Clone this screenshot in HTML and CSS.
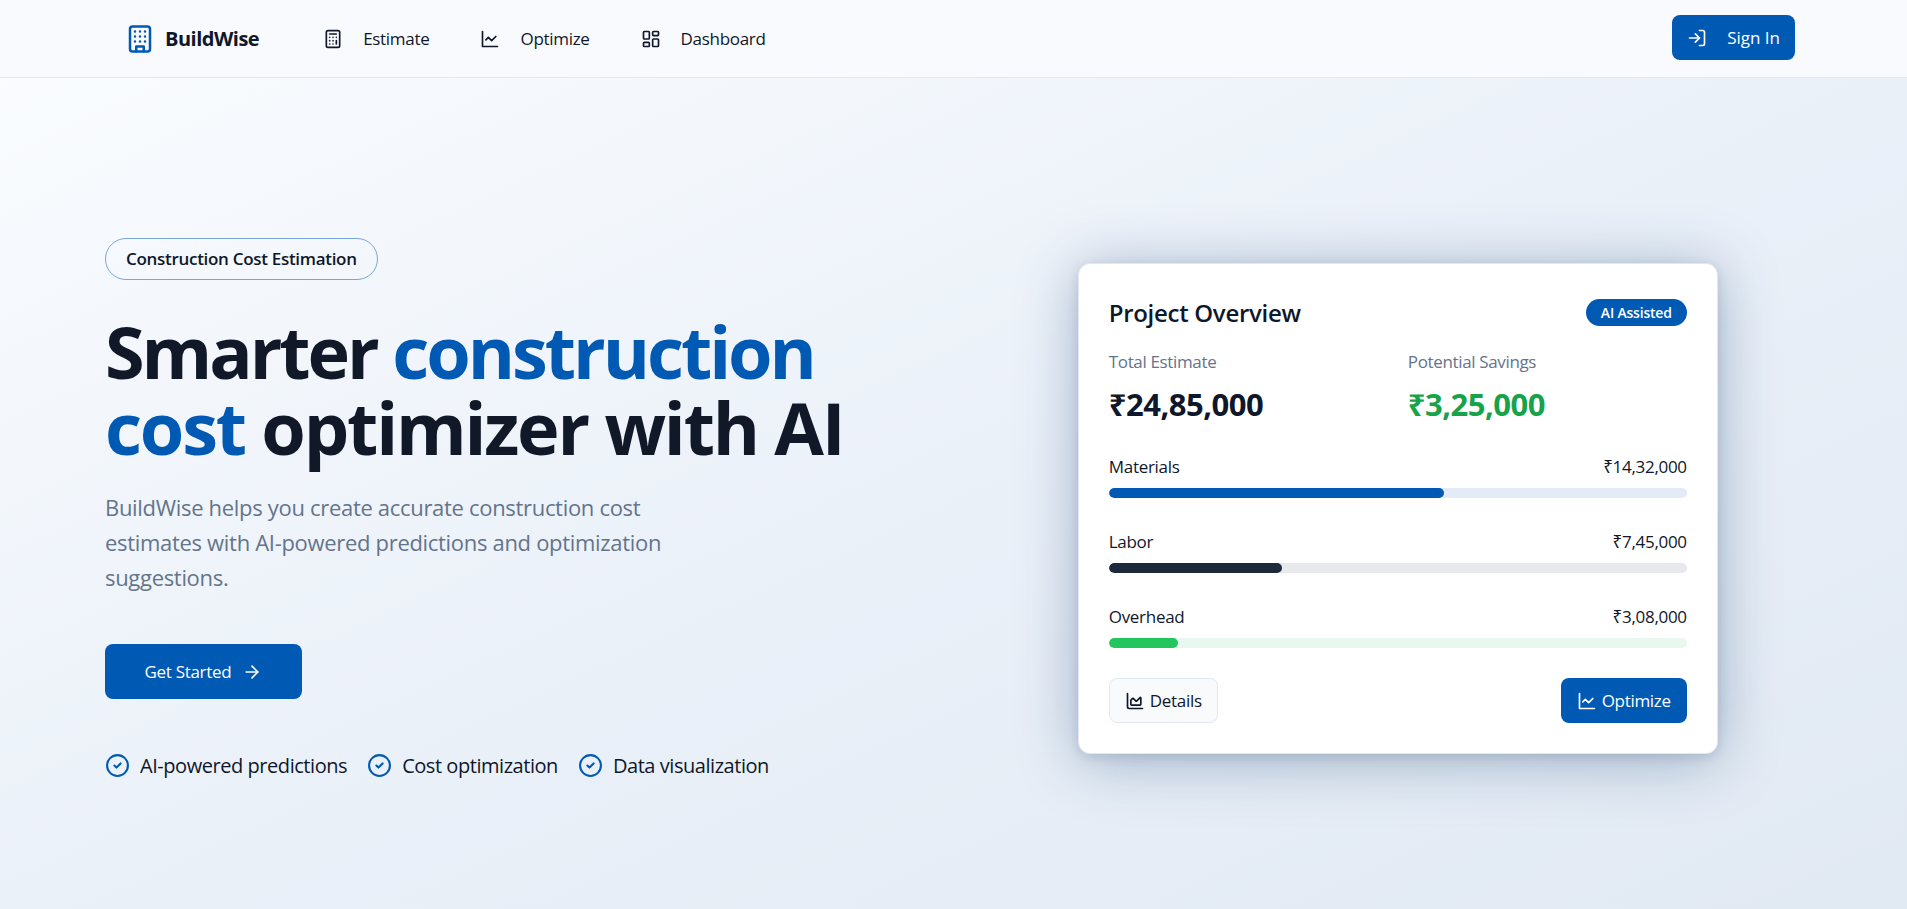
FILE: index.html
```html
<!DOCTYPE html>
<html lang="en">
<head>
  <meta charset="UTF-8" />
  <meta name="viewport" content="width=device-width, initial-scale=1.0"/>
  <title>BuildWise</title>
  <link rel="stylesheet" href="styles.css">
</head>
<body>

  <header class="topbar">
    <div class="topbar-left">
      <a class="brand" href="#">
        <svg class="icon brand-icon" viewBox="0 0 24 24"><rect x="4" y="2" width="16" height="20" rx="2"/><path d="M9 22v-4h6v4"/><path d="M8 6h.01M12 6h.01M16 6h.01M8 10h.01M12 10h.01M16 10h.01M8 14h.01M12 14h.01M16 14h.01"/></svg>
        <span>BuildWise</span>
      </a>
      <nav class="nav">
        <a href="#">
          <svg class="icon nav-icon" viewBox="0 0 24 24"><rect x="4" y="2" width="16" height="20" rx="2"/><path d="M8 6h8M16 14v4M16 10h.01M12 10h.01M8 10h.01M12 14h.01M8 14h.01M12 18h.01M8 18h.01"/></svg>
          Estimate
        </a>
        <a href="#">
          <svg class="icon nav-icon" viewBox="0 0 24 24"><path d="M3 3v18h18"/><path d="m19 9-5 5-4-4-3 3"/></svg>
          Optimize
        </a>
        <a href="#">
          <svg class="icon nav-icon" viewBox="0 0 24 24"><rect x="3" y="3" width="7" height="9" rx="1"/><rect x="14" y="3" width="7" height="5" rx="1"/><rect x="14" y="12" width="7" height="9" rx="1"/><rect x="3" y="16" width="7" height="5" rx="1"/></svg>
          Dashboard
        </a>
      </nav>
    </div>
    <a class="signin" href="#">
      <svg class="icon nav-icon" viewBox="0 0 24 24"><path d="M15 3h4a2 2 0 0 1 2 2v14a2 2 0 0 1-2 2h-4"/><path d="m10 17 5-5-5-5"/><path d="M15 12H3"/></svg>
      Sign In
    </a>
  </header>

  <main class="hero">
    <section class="hero-copy">
      <span class="pill">Construction Cost Estimation</span>
      <h1><span class="first-line">Smarter <em>construction</em></span> <em>cost</em> optimizer with AI</h1>
      <p class="lead">BuildWise helps you create accurate construction cost estimates with AI-powered predictions and optimization suggestions.</p>
      <a class="cta" href="#">
        Get Started
        <svg class="icon cta-icon" viewBox="0 0 24 24"><path d="M5 12h14"/><path d="m12 5 7 7-7 7"/></svg>
      </a>
      <ul class="perks">
        <li><svg class="icon perk-icon" viewBox="0 0 24 24"><circle cx="12" cy="12" r="10"/><path d="m9 12 2 2 4-4"/></svg>AI-powered predictions</li>
        <li><svg class="icon perk-icon" viewBox="0 0 24 24"><circle cx="12" cy="12" r="10"/><path d="m9 12 2 2 4-4"/></svg>Cost optimization</li>
        <li><svg class="icon perk-icon" viewBox="0 0 24 24"><circle cx="12" cy="12" r="10"/><path d="m9 12 2 2 4-4"/></svg>Data visualization</li>
      </ul>
    </section>

    <section class="hero-side">
      <div class="card">
        <div class="card-head">
          <h2>Project Overview</h2>
          <span class="tag">AI Assisted</span>
        </div>
        <div class="totals">
          <div>
            <div class="total-label">Total Estimate</div>
            <div class="total-value">₹24,85,000</div>
          </div>
          <div>
            <div class="total-label">Potential Savings</div>
            <div class="total-value green">₹3,25,000</div>
          </div>
        </div>
        <div class="costs">
          <div class="cost">
            <div class="cost-row"><span>Materials</span><span>₹14,32,000</span></div>
            <div class="track track-blue"><div class="fill fill-blue" style="width:58%"></div></div>
          </div>
          <div class="cost">
            <div class="cost-row"><span>Labor</span><span>₹7,45,000</span></div>
            <div class="track track-grey"><div class="fill fill-dark" style="width:30%"></div></div>
          </div>
          <div class="cost">
            <div class="cost-row"><span>Overhead</span><span>₹3,08,000</span></div>
            <div class="track track-green"><div class="fill fill-green" style="width:12%"></div></div>
          </div>
        </div>
        <div class="card-actions">
          <a class="btn btn-light" href="#">
            <svg class="icon btn-icon" viewBox="0 0 24 24"><path d="M3 3v16a2 2 0 0 0 2 2h16"/><path d="M7 11.207a.5.5 0 0 1 .146-.353l2-2a.5.5 0 0 1 .708 0l3.292 3.292a.5.5 0 0 0 .708 0l4.292-4.292a.5.5 0 0 1 .854.353V16a1 1 0 0 1-1 1H8a1 1 0 0 1-1-1z"/></svg>
            Details
          </a>
          <a class="btn btn-blue" href="#">
            <svg class="icon btn-icon" viewBox="0 0 24 24"><path d="M3 3v18h18"/><path d="m19 9-5 5-4-4-3 3"/></svg>
            Optimize
          </a>
        </div>
      </div>
    </section>
  </main>

</body>
</html>
```

FILE: styles.css
```css
:root {
  --azul: #005ab4;
  --oscuro: #0f172a;
  --gris: #64748b;
  --borde: #e2e8f0;
  --fuente: "Open Sans", "Noto Sans", Arial, sans-serif;
}
* { box-sizing: border-box; margin: 0; padding: 0; }
html, body { height: 100%; }
body {
  font-family: var(--fuente);
  color: var(--oscuro);
  background: linear-gradient(155deg, #fbfdff 0%, #ebf1f9 50%, #e1e9f3 100%);
  overflow: hidden;
}
a { color: inherit; text-decoration: none; }

.icon {
  fill: none;
  stroke: currentColor;
  stroke-width: 2;
  stroke-linecap: round;
  stroke-linejoin: round;
  flex: none;
}

/* Header */
.topbar {
  height: 78px;
  display: flex;
  align-items: center;
  justify-content: space-between;
  padding: 0 112px 0 125px;
  background: #f9fafd;
  border-bottom: 1px solid var(--borde);
}
.topbar-left { display: flex; align-items: center; }
.brand {
  display: flex;
  align-items: center;
  gap: 10px;
  font-size: 20px;
  font-weight: 700;
  letter-spacing: -0.5px;
}
.brand-icon { width: 30px; height: 30px; color: var(--azul); }
.nav { display: flex; gap: 51px; margin-left: 64px; }
.nav a {
  display: flex;
  align-items: center;
  gap: 20px;
  font-size: 17px;
  letter-spacing: -0.3px;
}
.nav-icon { width: 20px; height: 20px; }
.signin {
  display: flex;
  align-items: center;
  gap: 20px;
  height: 45px;
  margin-bottom: 2px;
  padding: 0 15px;
  border-radius: 8px;
  background: var(--azul);
  color: #fff;
  font-size: 17px;
}

/* Hero */
.hero {
  display: grid;
  grid-template-columns: 1fr 1fr;
  gap: 80px;
  align-items: center;
  height: 861px;
  padding: 0 105px;
}
.pill {
  display: inline-block;
  padding: 9px 20px;
  border: 1px solid #7aa5d8;
  border-radius: 999px;
  font-size: 17px;
  font-weight: 600;
  letter-spacing: -0.3px;
  line-height: 22px;
}
h1 {
  margin-top: 33px;
  font-size: 72px;
  line-height: 76px;
  font-weight: 700;
  letter-spacing: -2.2px;
  color: #111827;
  max-width: 760px;
}
h1 em { font-style: normal; color: var(--azul); }
.first-line { letter-spacing: -3.05px; }
.lead {
  margin-top: 25px;
  max-width: 580px;
  font-size: 22px;
  line-height: 35.2px;
  color: var(--gris);
  letter-spacing: -0.31px;
}
.cta {
  display: inline-flex;
  align-items: center;
  gap: 11px;
  height: 55px;
  margin-top: 49px;
  padding: 0 39.5px;
  border-radius: 8px;
  background: var(--azul);
  color: #fff;
  font-size: 17px;
  letter-spacing: -0.3px;
}
.cta-icon { width: 20px; height: 20px; }
.perks {
  display: flex;
  gap: 20px;
  margin-top: 53px;
  list-style: none;
  font-size: 20px;
  letter-spacing: -0.45px;
}
.perks li { display: flex; align-items: center; gap: 10px; }
.perk-icon { width: 25px; height: 25px; color: var(--azul); }

/* Tarjeta */
.hero-side { display: flex; justify-content: center; }
.card {
  width: 640px;
  padding: 32px 30px 30px;
  background: #fff;
  border: 1px solid #e2e8f0;
  border-radius: 12px;
  box-shadow: 0 6px 60px rgba(20, 60, 110, 0.35), 0 3px 12px rgba(15, 40, 80, 0.12);
}
.card-head {
  display: flex;
  align-items: center;
  justify-content: space-between;
}
.card-head h2 { font-size: 24px; font-weight: 600; letter-spacing: -0.3px; }
.tag {
  padding: 4px 15px;
  border-radius: 999px;
  background: var(--azul);
  color: #fff;
  font-size: 14px;
  font-weight: 600;
  letter-spacing: -0.2px;
}
.totals {
  display: grid;
  grid-template-columns: 1fr 1fr;
  gap: 0 20px;
  margin-top: 21px;
}
.total-label { font-size: 17px; color: var(--gris); letter-spacing: -0.35px; }
.total-value { margin-top: 10px; font-size: 31px; font-weight: 700; letter-spacing: -0.5px; }
.green { color: #16a34a; }
.costs { display: flex; flex-direction: column; gap: 32px; margin-top: 30px; }
.cost-row {
  display: flex;
  justify-content: space-between;
  font-size: 17px;
  letter-spacing: -0.3px;
}
.track { height: 10px; margin-top: 10px; border-radius: 5px; overflow: hidden; }
.track-blue { background: #e3ebf6; }
.track-grey { background: #e7e9ec; }
.track-green { background: #e8f8ee; }
.fill { height: 100%; border-radius: 5px; }
.fill-blue { background: var(--azul); }
.fill-dark { background: #1e293b; }
.fill-green { background: #22c55e; }
.card-actions {
  display: flex;
  justify-content: space-between;
  margin-top: 30px;
}
.btn {
  display: flex;
  align-items: center;
  gap: 5px;
  height: 45px;
  padding: 0 15px;
  border-radius: 8px;
  font-size: 17px;
  letter-spacing: -0.3px;
}
.btn-icon { width: 20px; height: 20px; }
.btn-light { background: #f8fafc; border: 1px solid var(--borde); }
.btn-blue { background: var(--azul); color: #fff; padding: 0 16px; }
```
